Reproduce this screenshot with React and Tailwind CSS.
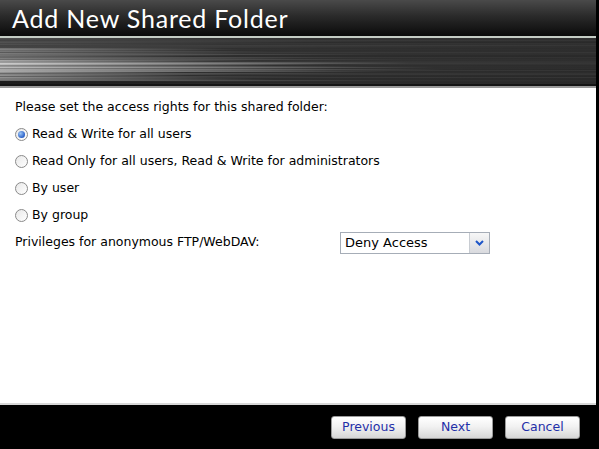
import React from "react";

const streaks = (() => {
  const rows = [];
  let seed = 7;
  const rnd = () => {
    seed = (seed * 9301 + 49297) % 233280;
    return seed / 233280;
  };
  for (let y = 0; y < 46; y++) {
    let peak;
    if (y < 10) peak = 0.28 + rnd() * 0.12;
    else if (y < 22) peak = 0.38 + rnd() * 0.18;
    else if (y < 34) peak = 0.6 + rnd() * 0.3;
    else if (y < 43) peak = 0.42 + rnd() * 0.25;
    else peak = 0.12;
    const base = 0.17 + rnd() * 0.06;
    rows.push({ y, peak, base, len: 0.3 + rnd() * 0.45 });
  }
  return rows;
})();

const g = (v) => {
  const c = Math.round(Math.min(1, v) * 255);
  return `rgb(${c},${c},${c})`;
};

function Streaks() {
  return (
    <svg width="596" height="46" viewBox="0 0 596 46" preserveAspectRatio="none" className="block">
      <defs>
        {streaks.map((s, i) => (
          <linearGradient key={i} id={`g${i}`} x1="0" y1="0" x2="1" y2="0">
            <stop offset="0" stopColor={g(s.peak * 0.9)} />
            <stop offset={s.len * 0.5} stopColor={g((s.peak * 0.9 + s.base) / 2)} />
            <stop offset={s.len} stopColor={g(s.base)} />
            <stop offset="1" stopColor={g(s.base * 0.92)} />
          </linearGradient>
        ))}
      </defs>
      {streaks.map((s, i) => (
        <rect key={i} x="0" y={s.y} width="596" height="1" fill={`url(#g${i})`} />
      ))}
    </svg>
  );
}

function Radio({ checked }) {
  return (
    <span className="relative inline-flex h-[13px] w-[13px] shrink-0 items-center justify-center rounded-full border border-[#8a8a8a] bg-[linear-gradient(135deg,#e8e8e8,#ffffff)]">
      {checked && (
        <span className="h-[7px] w-[7px] rounded-full bg-[radial-gradient(circle_at_35%_35%,#9cc6f5,#2a60c8_70%,#1a3f90)]" />
      )}
    </span>
  );
}

function Btn({ children }) {
  return (
    <button className="flex h-[23px] w-[75px] items-center justify-center rounded-[3px] border border-[#9a9a9a] bg-[linear-gradient(to_bottom,#ffffff,#f2f2f2_45%,#d6d6d6)] text-[12.5px] text-[#1f2fa8] [font-family:'DejaVu_Sans',Verdana,sans-serif]">
      {children}
    </button>
  );
}

export default function App() {
  const body = "[font-family:'DejaVu_Sans',Verdana,sans-serif] text-[12.5px] text-black";
  return (
    <div className="flex h-[449px] w-[599px] overflow-hidden bg-black">
      <div className="flex w-[596px] flex-col">
        {/* header */}
        <div className="flex h-[36px] items-center bg-[linear-gradient(to_bottom,#4a4a4a,#2a2a2a_45%,#0a0a0a)] pl-[12px]">
          <span className="pt-[1px] text-[25px] leading-none tracking-[0.8px] text-white [font-family:Lato,'Open_Sans',sans-serif]">
            Add New Shared Folder
          </span>
        </div>
        <div className="h-[2px] bg-[#c4ccc4]" />
        <Streaks />
        <div className="h-[2px] bg-[#151515]" />
        <div className="h-[2px] bg-[#9a9a9a]" />
        {/* content */}
        <div className={`flex flex-1 flex-col bg-white pl-[15px] pt-[6px] ${body}`}>
          <div className="flex h-[27px] items-center">Please set the access rights for this shared folder:</div>
          {[
            ["Read & Write for all users", true],
            ["Read Only for all users, Read & Write for administrators", false],
            ["By user", false],
            ["By group", false],
          ].map(([t, c]) => (
            <div key={t} className="flex h-[27px] items-center gap-[4px]">
              <Radio checked={c} />
              <span>{t}</span>
            </div>
          ))}
          <div className="flex h-[27px] items-center">
            <span className="w-[325px]">Privileges for anonymous FTP/WebDAV:</span>
            <div className="flex h-[22px] w-[150px] items-center border border-[#a6adb7] bg-white">
              <span className="flex-1 pl-[4px] text-[13px]">Deny Access</span>
              <span className="flex h-[20px] w-[20px] items-center justify-center border-l border-[#c8ccd2] bg-[linear-gradient(to_bottom,#f7f7f7,#d9dade)]">
                <svg width="9" height="6" viewBox="0 0 9 6">
                  <path d="M1 1 L4.5 4.5 L8 1" stroke="#1e56c8" strokeWidth="2" fill="none" />
                </svg>
              </span>
            </div>
          </div>
        </div>
        <div className="h-[2px] bg-[#d8d8d8]" />
        {/* footer */}
        <div className="flex h-[44px] items-center justify-end gap-[12px] bg-black pr-[16px]">
          <Btn>Previous</Btn>
          <Btn>Next</Btn>
          <Btn>Cancel</Btn>
        </div>
      </div>
    </div>
  );
}
